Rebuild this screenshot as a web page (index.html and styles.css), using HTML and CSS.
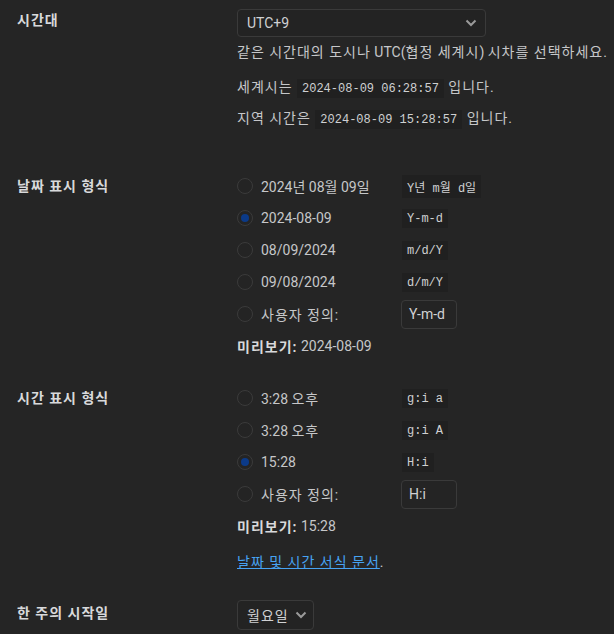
FILE: index.html
```html
<!DOCTYPE html>
<html lang="ko">
<head>
<meta charset="utf-8">
<title>일반 설정</title>
<link rel="stylesheet" href="styles.css">
</head>
<body>
<div class="page">
  <div class="row row-tz">
    <div class="label ko">시간대</div>
    <div class="field">
      <div class="select select-wide"><span>UTC+9</span><svg class="chev" width="12" height="8" viewBox="0 0 12 8"><path d="M1.5 1.5 L6 6 L10.5 1.5" fill="none" stroke="#9a9a9a" stroke-width="2"/></svg></div>
      <p class="desc"><span class="ko">같은 시간대의 도시나</span> UTC(<span class="ko">협정 세계시</span>) <span class="ko">시차를 선택하세요.</span></p>
      <p class="now first"><span class="ko">세계시는</span> <code>2024-08-09 06:28:57</code> <span class="ko">입니다.</span></p>
      <p class="now second"><span class="ko">지역 시간은</span> <code>2024-08-09 15:28:57</code> <span class="ko">입니다.</span></p>
    </div>
  </div>

  <div class="row row-date">
    <div class="label tall ko">날짜 표시 형식</div>
    <div class="field">
      <label class="opt"><input type="radio" name="df"><span class="dt">2024년 08월 09일</span><code>Y년 m월 d일</code></label>
      <label class="opt"><input type="radio" name="df" checked><span class="dt">2024-08-09</span><code>Y-m-d</code></label>
      <label class="opt"><input type="radio" name="df"><span class="dt">08/09/2024</span><code>m/d/Y</code></label>
      <label class="opt"><input type="radio" name="df"><span class="dt">09/08/2024</span><code>d/m/Y</code></label>
      <label class="opt"><input type="radio" name="df"><span class="dt ko">사용자 정의:</span><span class="custom">Y-m-d</span></label>
      <div class="opt preview"><strong class="ko">미리보기:</strong>&nbsp;2024-08-09</div>
    </div>
  </div>

  <div class="row row-time">
    <div class="label tall ko">시간 표시 형식</div>
    <div class="field">
      <label class="opt"><input type="radio" name="tf"><span class="dt">3:28 <span class="ko">오후</span></span><code>g:i a</code></label>
      <label class="opt"><input type="radio" name="tf"><span class="dt">3:28 <span class="ko">오후</span></span><code>g:i A</code></label>
      <label class="opt"><input type="radio" name="tf" checked><span class="dt">15:28</span><code>H:i</code></label>
      <label class="opt"><input type="radio" name="tf"><span class="dt ko">사용자 정의:</span><span class="custom">H:i</span></label>
      <div class="opt preview"><strong class="ko">미리보기:</strong>&nbsp;15:28</div>
      <p class="doc"><a class="ko" href="#">날짜 및 시간 서식 문서</a>.</p>
    </div>
  </div>

  <div class="row row-week">
    <div class="label week ko">한 주의 시작일</div>
    <div class="field">
      <div class="select select-small"><span class="ko">월요일</span><svg class="chev" width="12" height="8" viewBox="0 0 12 8"><path d="M1.5 1.5 L6 6 L10.5 1.5" fill="none" stroke="#9a9a9a" stroke-width="2"/></svg></div>
    </div>
  </div>
</div>
</body>
</html>
```
FILE: styles.css
```css
html, body {
  margin: 0;
  padding: 0;
  background: #252525;
}
body {
  font-family: Roboto, "Noto Sans CJK KR", sans-serif;
  font-size: 14px;
  color: #c6c7c9;
}
.ko {
  letter-spacing: 1px;
}
.page {
  padding-left: 17px;
}
.row {
  display: grid;
  grid-template-columns: 220px 1fr;
}
.label {
  font-weight: 700;
  color: #d8d9db;
  line-height: 22px;
}
.label.tall {
  line-height: 32px;
}
.label.week {
  line-height: 27px;
}
.field p {
  margin: 0;
}
.row-tz {
  padding-top: 9px;
}
.select {
  box-sizing: border-box;
  height: 28px;
  border: 1px solid #3a3a3a;
  border-radius: 4px;
  background: #232323;
  display: flex;
  align-items: center;
  justify-content: space-between;
  padding: 0 8px 0 9px;
  color: #d0d1d3;
}
.select-wide {
  width: 249px;
}
.select-small {
  width: 77px;
  height: 30px;
  padding-right: 6px;
}
.desc {
  margin-top: 5px !important;
  line-height: 20px;
}
.now {
  line-height: 20px;
}
.now.first {
  margin-top: 15px !important;
}
.now.second {
  margin-top: 9px !important;
}
code {
  font-family: "Liberation Mono", "Noto Sans CJK KR", monospace;
  font-size: 12px;
  background: #202020;
  padding: 3px 5px 2px;
  margin: 0 1px;
  color: #cfd0d2;
  letter-spacing: 0;
}
.row-date {
  margin-top: 40px;
}
.row-time {
  margin-top: 20px;
}
.row-week {
  margin-top: 26px;
}
.opt {
  display: flex;
  align-items: center;
  height: 32px;
}
input[type=radio] {
  appearance: none;
  -webkit-appearance: none;
  box-sizing: border-box;
  width: 16px;
  height: 16px;
  margin: 0 8px 0 0;
  border: 1px solid #3b3b3b;
  border-radius: 50%;
  background: #242424;
  display: grid;
  place-items: center;
}
input[type=radio]:checked::before {
  content: "";
  width: 8px;
  height: 8px;
  border-radius: 50%;
  background: #0b3a88;
}
.dt {
  display: inline-block;
  min-width: 140px;
}
.custom {
  box-sizing: border-box;
  height: 29px;
  width: 56px;
  border: 1px solid #3a3a3a;
  border-radius: 4px;
  background: #242424;
  display: flex;
  align-items: center;
  padding-left: 7px;
  color: #d0d1d3;
  letter-spacing: 0;
}
.preview strong {
  color: #d8d9db;
}
.doc {
  margin-top: 8px !important;
  line-height: 24px;
}
.doc a {
  color: #47a3f3;
  text-decoration: underline;
}
```
